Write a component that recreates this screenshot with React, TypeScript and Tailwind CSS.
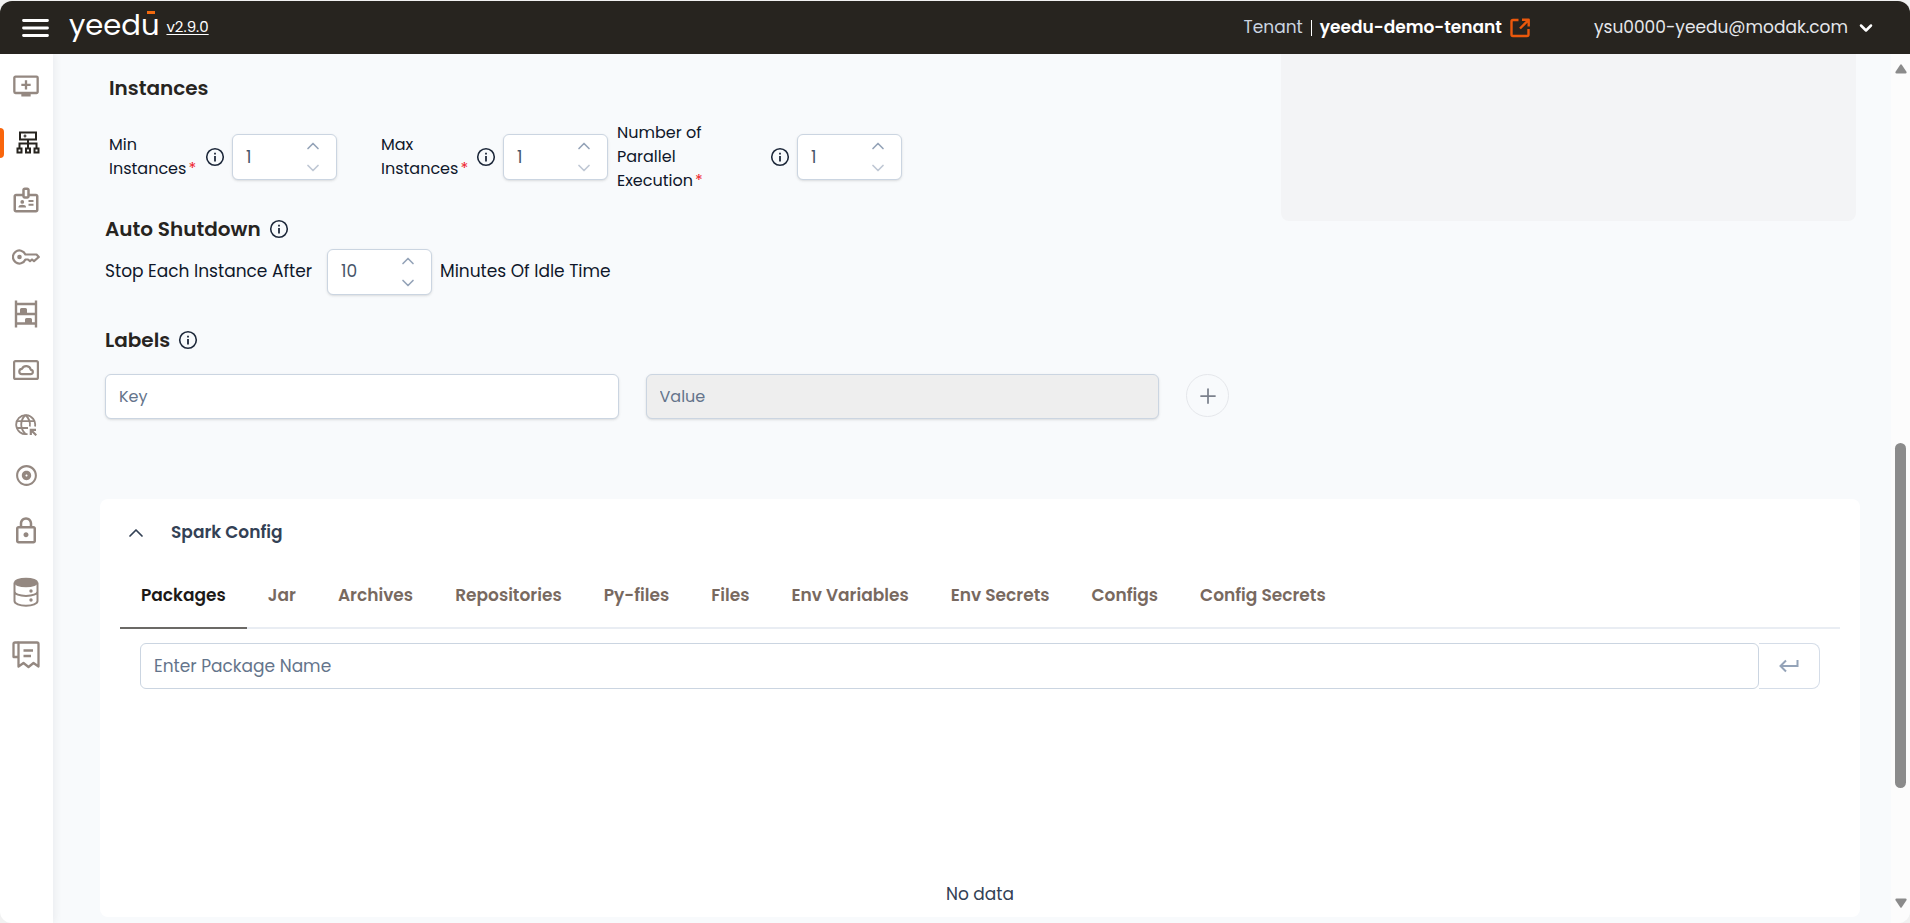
import React, { useState } from 'react';
import { MdAddToQueue, MdOutlineBadge, MdOutlineLock, MdOutlineAlbum } from 'react-icons/md';
import { ChevronUp, ChevronDown, Plus } from 'lucide-react';

function ClusterIcon() {
  return (
    <svg width="24" height="23" viewBox="0 0 24 23" fill="none" stroke="currentColor" strokeWidth="2">
      <path d="M4 1.5h16v7H4zM12 8.5V18M3.500 17v-4.500h17V17" />
      <path d="M1.500 17.500h4v4h-4zM10 17.500h4v4h-4zM18.500 17.500h4v4h-4z" />
      <path d="M7.500 5h3M9 3.500v3" strokeWidth="1.200" />
    </svg>
  );
}

function KeyIcon() {
  return (
    <svg width="28" height="16" viewBox="0 0 28 16" fill="none" stroke="currentColor" strokeWidth="2.200" strokeLinejoin="round">
      <path d="M13.400 5.500A6.500 6.500 0 1 0 13.400 10.500H16l2 1.700 2-1.700 2 1.700L26.800 8 24.500 5.500z" />
      <circle cx="7.500" cy="8" r="2.300" fill="currentColor" stroke="none" />
    </svg>
  );
}

function ShelvesIcon() {
  return (
    <svg width="24" height="28" viewBox="0 0 24 28" fill="none" stroke="currentColor" strokeWidth="2.400">
      <path d="M2 .5v27M22 .5v27M2 4h20M2 14h20M2 23.500h20" />
      <path d="M6 13V9.500Q6 8 7.500 8h4Q13 8 13 9.500V13zM11 23v-3.500q0-1.500 1.500-1.500h4q1.500 0 1.500 1.500V23z" fill="currentColor" stroke="none" />
    </svg>
  );
}

function CloudPanelIcon() {
  return (
    <svg width="26" height="20" viewBox="0 0 26 20" fill="none" stroke="currentColor" strokeWidth="2.200" strokeLinejoin="round">
      <rect x="1.100" y="1.100" width="23.800" height="17.800" rx="1.500" />
      <path d="M9 14.200h8.500a2.200 2.200 0 0 0 .3-4.400 4.700 4.700 0 0 0-8.800-1 2.700 2.700 0 0 0 0 5.400z" />
    </svg>
  );
}

function GlobeArrowIcon() {
  return (
    <svg width="22" height="22" viewBox="0 0 22 22" fill="none" stroke="currentColor" strokeWidth="1.800">
      <path d="M12.500 20A9.500 9.500 0 1 1 20 12.500" />
      <path d="M10.500 1C4.800 6.500 4.800 14.500 10.500 20M10.500 1c3.600 3.400 5 7.500 4.300 11.500M2 7.200h17.200M2 14h11" />
      <path d="M21 15.800h-5.200V21M16 16l5.300 5.300" strokeWidth="2.200" />
    </svg>
  );
}

function DatabaseIcon() {
  return (
    <svg width="26" height="30" viewBox="0 0 26 30" fill="none" stroke="currentColor" strokeWidth="2">
      <ellipse cx="13" cy="5.500" rx="12" ry="4.800" fill="currentColor" stroke="none" />
      <path d="M1.500 5.500v18.500c0 2.600 5 4.700 11.500 4.700s11.500-2.100 11.500-4.700V5.500M1.500 14.500c0 2.600 5 4.400 11.500 4.400s11.500-1.800 11.500-4.400" />
      <circle cx="18" cy="14" r="1.700" fill="currentColor" stroke="none" />
      <circle cx="18" cy="23" r="1.700" fill="currentColor" stroke="none" />
    </svg>
  );
}

function BillingIcon() {
  return (
    <svg width="28" height="28" viewBox="0 0 28 28" fill="none" stroke="currentColor" strokeWidth="2.300" strokeLinejoin="round">
      <path d="M6.500 1.500H25Q26.500 1.500 26.500 3v22.500L21.500 22l-5 4-5-4-5 3.500z" />
      <path d="M6.500 1.500H3Q1.500 1.500 1.500 3v13h5M11.500 9.500h9.500M11.500 15h7.500" />
    </svg>
  );
}

const navItems = [
  { label: 'Workspaces', cell: 'h-[57px]', icon: <MdAddToQueue size={28} /> },
  { label: 'Clusters', cell: 'h-[57px]', icon: <ClusterIcon />, active: true },
  { label: 'Credentials', cell: 'h-[57px]', icon: <MdOutlineBadge size={30} /> },
  { label: 'Keys', cell: 'h-[57px]', icon: <KeyIcon /> },
  { label: 'Object storage', cell: 'h-[57px]', icon: <ShelvesIcon /> },
  { label: 'Cloud', cell: 'h-[55px]', icon: <CloudPanelIcon /> },
  { label: 'Network', cell: 'h-[55px]', icon: <GlobeArrowIcon /> },
  { label: 'Disk', cell: 'h-[47px]', icon: <MdOutlineAlbum size={25} /> },
  { label: 'Security', cell: 'h-[63px]', icon: <MdOutlineLock size={30} /> },
  { label: 'Metastore', cell: 'h-[59px]', icon: <DatabaseIcon /> },
  { label: 'Billing', cell: 'h-[67px]', icon: <BillingIcon /> },
];

const tabs = [
  'Packages', 'Jar', 'Archives', 'Repositories', 'Py-files', 'Files',
  'Env Variables', 'Env Secrets', 'Configs', 'Config Secrets',
];

function InfoIcon() {
  return (
    <svg className="shrink-0 text-[#1e293b]" width="20" height="20" viewBox="0 0 20 20" fill="none" stroke="currentColor" strokeWidth="1.600">
      <circle cx="10" cy="10" r="8.300" />
      <path d="M10 9v5.500M10 5.800v1.800" strokeWidth="1.800" />
    </svg>
  );
}

interface StepperProps {
  id: string;
  initial: number;
  min?: number;
}

function Stepper({ id, initial, min = 1 }: StepperProps) {
  const [value, setValue] = useState(initial);
  const atMin = value <= min;

  return (
    <div className="flex h-[46px] w-[105px] shrink-0 rounded-md border border-[#cbd5e1] bg-white shadow-sm">
      <input
        id={id}
        type="text"
        inputMode="numeric"
        value={value}
        onChange={e => setValue(Number(e.target.value) || min)}
        className="w-16 bg-transparent pl-[13px] text-[17px] text-[#475569] outline-none"
      />
      <div className="flex w-8 flex-col items-center justify-center gap-0.5 text-[#94a3b8]">
        <button type="button" aria-label="Increase" onClick={() => setValue(value + 1)}>
          <ChevronUp size={20} />
        </button>
        <button type="button" aria-label="Decrease" disabled={atMin} onClick={() => setValue(value - 1)} className="disabled:opacity-60">
          <ChevronDown size={20} />
        </button>
      </div>
    </div>
  );
}

function Required() {
  return <span className="ml-0.5 text-[#ef1c2c]">*</span>;
}

function Header() {
  return (
    <header className="mt-px flex h-[53px] shrink-0 items-center justify-between rounded-t-xl bg-[#27241f] pr-[34px] pl-[22px] text-white">
      <div className="flex items-center">
        <button type="button" aria-label="Toggle menu">
          <svg width="27" height="18" viewBox="0 0 27 18" fill="none" stroke="currentColor" strokeWidth="2.800" strokeLinecap="round">
            <path d="M1.500 1.500h24M1.500 9h24M1.500 16.500h24" />
          </svg>
        </button>
        <span className="relative ml-5 pb-1.5 text-[29px] leading-8">
          yeedu
          <span className="absolute top-0.5 right-1 h-[3px] w-2 bg-[#f26a0f]" />
        </span>
        <a href="#version" className="ml-[7px] text-[15px] underline underline-offset-2">v2.9.0</a>
      </div>
      <div className="flex items-center text-[17px]">
        <span className="text-[#cbd5e1]">Tenant</span>
        <span className="mx-2 h-4 w-px bg-white" />
        <a href="#tenant" className="flex items-center gap-2 font-semibold">
          yeedu-demo-tenant
          <svg width="20" height="20" viewBox="0 0 20 20" fill="none" stroke="#ea580c" strokeWidth="2.400" strokeLinejoin="round">
            <path d="M8.500 2H3Q1.500 2 1.500 3.500v13Q1.500 18 3 18h14q1.500 0 1.500-1.500V11M12 1.800h6.700v6.700M18.500 2 10 10.500" />
          </svg>
        </a>
        <button type="button" className="ml-16 flex items-center gap-2 text-[#e5e7eb]">
          ysu0000-yeedu@modak.com
          <ChevronDown size={20} strokeWidth={3} className="text-white" />
        </button>
      </div>
    </header>
  );
}

function Sidebar() {
  return (
    <nav className="z-10 flex w-[53px] shrink-0 flex-col bg-white pt-[3px] shadow-[2px_0_8px_rgba(15,23,42,0.06)]">
      {navItems.map(item => (
        <a
          key={item.label}
          href="#nav"
          aria-label={item.label}
          className={`flex items-center ${item.cell} ${item.active ? 'text-[#27241f]' : 'text-[#948881]'}`}
        >
          <span className={`h-[30px] w-1 rounded-r-sm ${item.active ? 'bg-[#f9650c]' : ''}`} />
          <span className={`flex flex-1 justify-center ${item.active ? 'pr-0.5' : 'pr-[5px]'}`}>{item.icon}</span>
        </a>
      ))}
    </nav>
  );
}

function InstancesForm() {
  return (
    <section className="flex-1 pl-[5px]">
      <h2 className="pt-5 pl-1 text-xl leading-7 font-semibold text-[#27241f]">Instances</h2>

      <div className="mt-[13px] flex h-[84px] items-center pl-1 leading-6 text-[#0f172a]">
        <label htmlFor="min" className="w-24">Min Instances<Required /></label>
        <InfoIcon />
        <div className="mr-11 ml-[7px]"><Stepper id="min" initial={1} /></div>
        <label htmlFor="max" className="w-[95px]">Max Instances<Required /></label>
        <InfoIcon />
        <div className="mr-[9px] ml-[7px]"><Stepper id="max" initial={1} /></div>
        <label htmlFor="parallel" className="mr-[53px] w-[100px]">Number of Parallel Execution<Required /></label>
        <InfoIcon />
        <div className="ml-[7px]"><Stepper id="parallel" initial={1} /></div>
      </div>

      <h2 className="mt-4 flex items-center gap-2 text-xl leading-7 font-semibold text-[#27241f]">
        Auto Shutdown <InfoIcon />
      </h2>
      <div className="mt-1.5 flex items-center gap-2 text-[17px] text-[#0f172a]">
        <label htmlFor="idle" className="w-[214px]">Stop Each Instance After</label>
        <Stepper id="idle" initial={10} />
        <span>Minutes Of Idle Time</span>
      </div>

      <h2 className="mt-[31px] flex items-center gap-2 text-xl leading-7 font-semibold text-[#27241f]">
        Labels <InfoIcon />
      </h2>
      <div className="mt-5 flex items-start gap-[27px]">
        <input
          type="text"
          aria-label="Key"
          placeholder="Key"
          className="h-[45px] min-w-0 flex-1 rounded-md border border-[#cbd5e1] bg-white px-[13px] shadow-sm placeholder:text-[#64748b]"
        />
        <input
          type="text"
          aria-label="Value"
          placeholder="Value"
          disabled
          className="h-[45px] min-w-0 flex-1 rounded-md border border-[#cbd5e1] bg-[#eeeeee] px-[13px] shadow-sm placeholder:text-[#64748b]"
        />
        <button type="button" aria-label="Add label" className="flex size-[43px] shrink-0 items-center justify-center rounded-full border border-[#e5e7eb] text-[#7b818c]">
          <Plus size={24} strokeWidth={1.75} />
        </button>
      </div>
    </section>
  );
}

function SparkConfig() {
  const [active, setActive] = useState('Packages');

  return (
    <section className="mt-20 flex flex-1 flex-col rounded-lg bg-white px-5 text-[17px]">
      <button type="button" className="mt-5 flex h-7 items-center gap-[23px] self-start pl-1 font-semibold text-[#334155]">
        <ChevronUp size={24} strokeWidth={1.75} />
        Spark Config
      </button>

      <div role="tablist" className="mt-[18px] flex border-b-2 border-[#e9edf3]">
        {tabs.map(tab => (
          <button
            key={tab}
            type="button"
            role="tab"
            aria-selected={tab === active}
            onClick={() => setActive(tab)}
            className={`-mb-0.5 h-16 border-b-2 px-[21px] font-semibold ${
              tab === active ? 'border-[#6b6966] text-[#1c1917]' : 'border-transparent text-[#78695f]'
            }`}
          >
            {tab}
          </button>
        ))}
      </div>

      <div className="mt-3.5 flex px-5">
        <input
          type="text"
          aria-label="Package name"
          placeholder="Enter Package Name"
          className="h-[46px] min-w-0 flex-1 rounded-md border border-[#cbd5e1] px-[13px] placeholder:text-[#64748b]"
        />
        <button type="button" aria-label="Add package" className="flex w-[61px] items-center justify-center rounded-r-lg border border-l-0 border-[#d5dde8] text-[#94a3b8]">
          <svg width="20" height="14" viewBox="0 0 20 14" fill="none" stroke="currentColor" strokeWidth="2">
            <path d="M18.500 1v6H1.500M7 1.500 1.500 7 7 12.500" />
          </svg>
        </button>
      </div>

      <p className="mt-auto pb-2.5 text-center text-[#334155]">No data</p>
    </section>
  );
}

function Scrollbar() {
  return (
    <div className="flex w-[19px] shrink-0 flex-col items-center bg-[#fcfcfc] pt-2.5 pb-[15px]">
      <svg width="12" height="10" viewBox="0 0 12 10" fill="#8b8b8b">
        <path d="M5.200.8q.8-1 1.600 0l4.500 6.700q1 2-1 2H1.700q-2 0-1-2z" />
      </svg>
      <div className="flex w-[11px] flex-1 flex-col">
        <div className="flex-[369]" />
        <div className="flex-[345] rounded-full bg-[#8b8b8b]" />
        <div className="flex-[110]" />
      </div>
      <svg width="12" height="10" viewBox="0 0 12 10" fill="#8b8b8b">
        <path d="M5.200 9.200q.8 1 1.600 0l4.500-6.700q1-2-1-2H1.700q-2 0-1 2z" />
      </svg>
    </div>
  );
}

export default function App() {
  return (
    <div className="flex h-screen flex-col overflow-hidden bg-[#f1f1f1] font-['Poppins','Inter',sans-serif]">
      <Header />
      <div className="flex min-h-0 flex-1 overflow-hidden rounded-b-xl bg-[#f8fafc]">
        <Sidebar />
        <main className="flex min-w-0 flex-1 flex-col pr-[31px] pb-1.5 pl-[47px]">
          <div className="flex items-start gap-[52px] pr-1">
            <InstancesForm />
            <aside className="h-[167px] w-[575px] shrink-0 rounded-b-lg bg-[#f3f4f6]" />
          </div>
          <SparkConfig />
        </main>
        <Scrollbar />
      </div>
    </div>
  );
}
